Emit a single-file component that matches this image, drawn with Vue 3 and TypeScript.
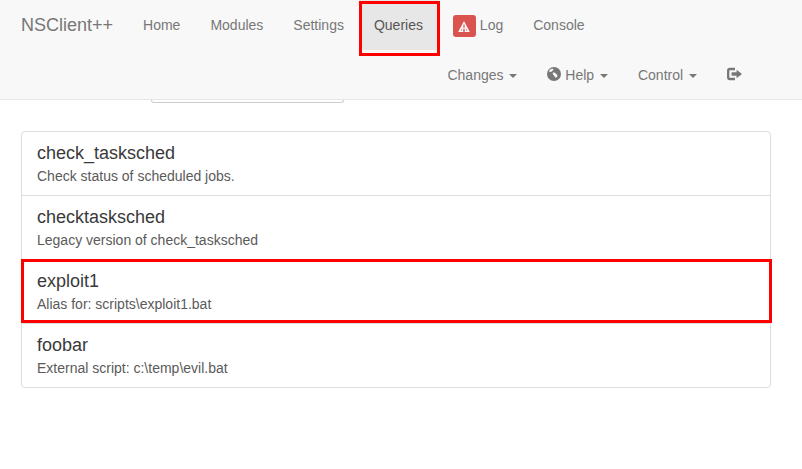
<script setup lang="ts">
const items = [
  { name: 'check_tasksched', desc: 'Check status of scheduled jobs.', marked: false },
  { name: 'checktasksched', desc: 'Legacy version of check_tasksched', marked: false },
  { name: 'exploit1', desc: 'Alias for: scripts\\exploit1.bat', marked: true },
  { name: 'foobar', desc: 'External script: c:\\temp\\evil.bat', marked: false },
]
</script>

<template>
  <div class="page">
    <header class="navbar">
      <div class="row">
        <a class="brand">NSClient++</a>
        <a class="link">Home</a>
        <a class="link">Modules</a>
        <a class="link">Settings</a>
        <a class="link active">Queries<span class="mark-nav"></span></a>
        <a class="link">
          <span class="badge">
            <svg width="12" height="11" viewBox="0 0 12 11">
              <path d="M6 0 L11.8 11 H0.2 Z" fill="#fff" />
              <path d="M5.3 3.6 H6.7 L6.5 7 H5.5 Z M5.3 7.8 H6.7 V11 H5.3 Z" fill="#d9534f" />
              <path d="M3.6 7.4 L4.3 7.4 L4.1 10 L2.7 10 Z M7.7 7.4 L8.4 7.4 L9.3 10 L7.9 10 Z" fill="#d9534f" opacity="0.6" />
            </svg>
          </span>
          Log
        </a>
        <a class="link">Console</a>
      </div>
      <div class="row right">
        <a class="link">Changes <i class="caret"></i></a>
        <a class="link">
          <svg class="icon" width="14" height="14" viewBox="0 0 14 14">
            <circle cx="7" cy="7" r="7" fill="#777" />
            <path d="M3 2.4 C4.2 1.6 5.6 1.6 6.4 2 C6.6 3 5.6 3.4 5 4.2 C4.4 5 3.4 4.8 2.4 5 C2.2 4 2.4 3 3 2.4 Z M6 5.6 C7.4 5.2 8.2 6 9 6.8 C10 7.4 10.6 8.4 10.4 9.4 C9.8 10.4 9 10.6 8.2 10.4 C7.4 9.6 7.4 8.6 6.6 8 C5.8 7.4 5.4 6.4 6 5.6 Z" fill="#f8f8f8" />
          </svg>
          Help <i class="caret"></i>
        </a>
        <a class="link">Control <i class="caret"></i></a>
        <a class="link">
          <svg class="icon" width="15" height="14" viewBox="0 0 15 14">
            <path d="M8 2 H2.8 C1.8 2 1.2 2.6 1.2 3.6 V10.4 C1.2 11.4 1.8 12 2.8 12 H8" fill="none" stroke="#777" stroke-width="2.3" />
            <path d="M4.6 5.2 H9.6 V2.8 L15 7 L9.6 11.2 V8.8 H4.6 Z" fill="#777" />
          </svg>
        </a>
      </div>
    </header>
    <div class="search-edge"></div>
    <main class="list">
      <div v-for="item in items" :key="item.name" class="item">
        <h4>{{ item.name }}</h4>
        <p>{{ item.desc }}</p>
        <span v-if="item.marked" class="mark-item"></span>
      </div>
    </main>
  </div>
</template>

<style>
html, body { margin: 0; background: #fff; }
</style>

<style scoped>
.page {
  width: 802px;
  height: 469px;
  overflow: hidden;
  font-family: "Liberation Sans", Arial, sans-serif;
  font-size: 14px;
  line-height: 20px;
  color: #333;
}
.navbar {
  height: 99px;
  background: #f8f8f8;
  border-bottom: 1px solid #e7e7e7;
}
.row {
  display: flex;
  height: 50px;
}
.row.right {
  justify-content: flex-end;
  padding-right: 45px;
}
.brand {
  padding: 15px;
  margin-left: 6px;
  font-size: 18px;
  color: #777;
}
.link {
  position: relative;
  display: block;
  height: 20px;
  padding: 15px;
  color: #777;
  white-space: nowrap;
}
.active {
  background: #e7e7e7;
  color: #555;
}
.badge {
  display: inline-flex;
  align-items: center;
  justify-content: center;
  width: 23px;
  height: 22px;
  border-radius: 3px;
  background: #d9534f;
  vertical-align: top;
}
.icon {
  vertical-align: -1px;
}
.caret {
  display: inline-block;
  width: 0;
  height: 0;
  margin-left: 2px;
  vertical-align: middle;
  border-top: 4px solid #777;
  border-left: 4px solid transparent;
  border-right: 4px solid transparent;
}
.mark-nav {
  position: absolute;
  left: 0;
  top: 1px;
  width: 75px;
  height: 49px;
  border: 3px solid #f00;
}
.search-edge {
  box-sizing: border-box;
  width: 193px;
  height: 3px;
  margin-left: 151px;
  background: #fff;
  border: 1px solid #ccc;
  border-top: none;
  border-radius: 0 0 4px 4px;
}
.list {
  margin: 28px 31px 0 21px;
}
.item {
  position: relative;
  height: 43px;
  padding: 11px 15px 9px;
  margin-bottom: -1px;
  border: 1px solid #ddd;
  background: #fff;
}
.item:first-child {
  border-radius: 4px 4px 0 0;
}
.item:last-child {
  border-radius: 0 0 4px 4px;
}
h4 {
  margin: 0 0 4px;
  font-size: 18px;
  font-weight: 500;
  line-height: 20px;
  color: #3a3a3a;
}
p {
  margin: 0;
  font-size: 14px;
  line-height: 19px;
  color: #5a5a5a;
}
.mark-item {
  position: absolute;
  z-index: 1;
  left: -1px;
  top: -1px;
  width: 745px;
  height: 58px;
  border: 3px solid #f00;
}
</style>
